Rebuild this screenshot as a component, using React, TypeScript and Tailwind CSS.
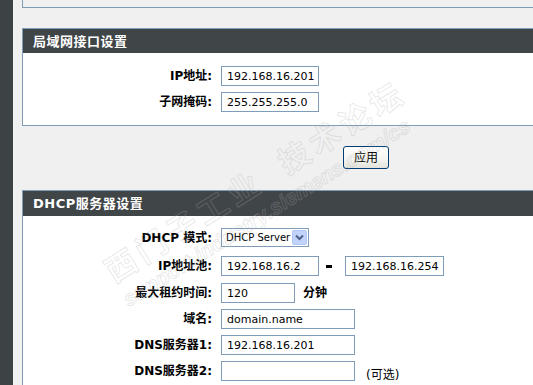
import React from "react";

const Label = ({ children }: { children: React.ReactNode }) => (
  <div className="w-[190px] shrink-0 text-right text-[12px] font-bold text-black leading-none pr-[1px]">
    {children}
  </div>
);

const Input = ({ value, w }: { value: string; w: string }) => (
  <div
    className={`${w} h-[20px] shrink-0 border border-[#7f9db9] bg-white pl-[5px] flex items-center text-[11px] text-black leading-none whitespace-nowrap`}
  >
    {value}
  </div>
);

export default function App() {
  return (
    <div className="relative w-[533px] h-[385px] overflow-hidden flex bg-[#f0f0f0] font-['DejaVu_Sans','Noto_Sans_CJK_SC',sans-serif]">
      <div className="w-[13px] h-[385px] shrink-0 bg-[#3d4245]" />
      <div className="flex-1 min-w-0 h-[385px] overflow-hidden pl-[9px]">
        <div className="w-[600px] flex flex-col">
          {/* top panel remainder */}
          <div className="h-[8px] border-l border-b border-[#7f9db9]" />

          {/* LAN section */}
          <div className="mt-[20px] h-[98px] border border-[#7f9db9] bg-white flex flex-col">
            <div className="h-[24px] shrink-0 bg-[#404548] flex items-center pl-[10px] text-white text-[13px] font-bold tracking-[0.5px] leading-none">
              局域网接口设置
            </div>
            <div className="pt-[13px] flex flex-col gap-[6px]">
              <div className="flex items-center gap-[8px] h-[20px]">
                <Label>IP地址:</Label>
                <Input value="192.168.16.201" w="w-[98px]" />
              </div>
              <div className="flex items-center gap-[8px] h-[20px]">
                <Label>子网掩码:</Label>
                <Input value="255.255.255.0" w="w-[98px]" />
              </div>
            </div>
          </div>

          {/* apply button */}
          <div className="h-[64px] shrink-0 pt-[20px] pl-[321px]">
            <div className="w-[46px] h-[23px] rounded-[3px] border border-[#003c74] bg-[linear-gradient(#ffffff,#f4f4f0_60%,#e3e3db)] flex items-center justify-center text-[12px] text-black leading-none">
              应用
            </div>
          </div>

          {/* DHCP section */}
          <div className="border border-[#7f9db9] bg-white flex flex-col">
            <div className="h-[25px] shrink-0 bg-[#404548] flex items-center pl-[10px] text-white text-[13px] font-bold tracking-[0.5px] leading-none">
              DHCP服务器设置
            </div>
            <div className="pt-[12px] flex flex-col">
              <div className="flex items-center gap-[8px] h-[19px]">
                <Label>DHCP 模式:</Label>
                <div className="w-[88px] h-[19px] border border-[#7f9db9] bg-white flex items-center justify-between pl-[4px] pr-[1px]">
                  <span className="text-[10px] leading-none text-black whitespace-nowrap">DHCP Server</span>
                  <span className="w-[15px] h-[15px] shrink-0 rounded-[2px] bg-[#c1d3fb] border border-[#b2c6f3] flex items-center justify-center">
                    <svg width="9" height="7" viewBox="0 0 9 7">
                      <path d="M1 1.5 L4.5 5 L8 1.5" fill="none" stroke="#4d6185" strokeWidth="2" />
                    </svg>
                  </span>
                </div>
              </div>
              <div className="flex items-center gap-[8px] h-[20px] mt-[9px]">
                <Label>IP地址池:</Label>
                <Input value="192.168.16.2" w="w-[98px]" />
                <div className="w-[6px] h-[3px] shrink-0 bg-black ml-[-1px] mr-[5px]" />
                <Input value="192.168.16.254" w="w-[99px]" />
              </div>
              <div className="flex items-center gap-[8px] h-[20px] mt-[7px]">
                <Label>最大租约时间:</Label>
                <Input value="120" w="w-[74px]" />
                <span className="text-[12px] font-bold leading-none text-black">分钟</span>
              </div>
              <div className="flex items-center gap-[8px] h-[20px] mt-[6px]">
                <Label>域名:</Label>
                <Input value="domain.name" w="w-[134px]" />
              </div>
              <div className="flex items-center gap-[8px] h-[20px] mt-[6px]">
                <Label>DNS服务器1:</Label>
                <Input value="192.168.16.201" w="w-[134px]" />
              </div>
              <div className="flex items-center gap-[8px] h-[20px] mt-[6px] mb-[10px]">
                <Label>DNS服务器2:</Label>
                <Input value="" w="w-[134px]" />
                <span className="ml-[3px] mt-[8px] text-[12px] leading-none text-black">(可选)</span>
              </div>
            </div>
          </div>
        </div>
      </div>

      {/* watermark */}
      <div className="pointer-events-none absolute left-[262px] top-[192px] -translate-x-1/2 -translate-y-1/2 -rotate-[32deg] flex flex-col items-start whitespace-nowrap">
        <div className="text-[31px] font-bold leading-none tracking-[5px] text-transparent [-webkit-text-stroke:1px_rgba(175,175,175,0.28)] font-['Noto_Sans_CJK_SC',sans-serif]">
          西门子工业&nbsp;&nbsp;技术论坛
        </div>
        <div className="mt-[8px] text-[21px] font-bold italic leading-none text-transparent [-webkit-text-stroke:1px_rgba(175,175,175,0.28)] font-['Liberation_Sans',sans-serif]">
          support.industry.siemens.com/cs
        </div>
      </div>
    </div>
  );
}
